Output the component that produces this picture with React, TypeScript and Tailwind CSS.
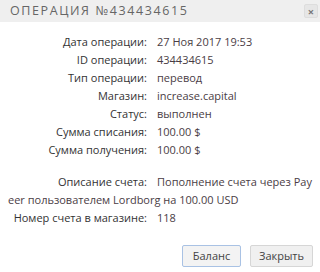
import React from "react";

const rows: [string, string][] = [
  ["Дата операции:", "27 Ноя 2017 19:53"],
  ["ID операции:", "434434615"],
  ["Тип операции:", "перевод"],
  ["Магазин:", "increase.capital"],
  ["Статус:", "выполнен"],
  ["Сумма списания:", "100.00 $"],
  ["Сумма получения:", "100.00 $"],
];

export default function App() {
  return (
    <div
      className="w-[320px] h-[272px] bg-white text-[11px] text-[#333] overflow-hidden"
      style={{ fontFamily: '"Open Sans", "Noto Sans", sans-serif' }}
    >
      <div className="h-[22px] bg-[#efefef] flex items-center justify-between pl-[10px] pr-[2px]">
        <span className="text-[12.5px] tracking-[1.6px] text-[#666]">ОПЕРАЦИЯ №434434615</span>
        <button className="w-[14px] h-[14px] border border-[#ddd] bg-[#e6e6e6] rounded-[2px] flex items-center justify-center text-[#777] text-[11px] font-bold leading-none">
          ×
        </button>
      </div>
      <div className="pt-[11px] px-[8px] leading-[18px]">
        {rows.map(([label, value]) => (
          <div key={label} className="flex">
            <span className="w-[139px] text-right">{label}</span>
            <span className="pl-[10px] text-[#4a3d45]">{value}</span>
          </div>
        ))}
        <p className="mt-[14px] break-all">
          <span className="inline-block w-[139px] text-right break-normal">Описание счета:</span>
          <span className="pl-[10px] text-[#4a3d45]">
            Пополнение счета через Payeer пользователем Lordborg на 100.00 USD
          </span>
        </p>
        <div className="flex">
          <span className="w-[139px] text-right">Номер счета в магазине:</span>
          <span className="pl-[10px] text-[#4a3d45]">118</span>
        </div>
      </div>
      <div className="flex justify-end gap-[9px] pr-[7px] mt-[18px]">
        <button className="h-[22px] w-[59px] border border-[#a9c2e4] bg-[#f3f3f3] rounded-[2px] text-[11px] text-[#444]">
          Баланс
        </button>
        <button className="h-[22px] w-[63px] border border-[#d6d6d6] bg-[#f0f0f0] rounded-[2px] text-[11px] text-[#444]">
          Закрыть
        </button>
      </div>
    </div>
  );
}
